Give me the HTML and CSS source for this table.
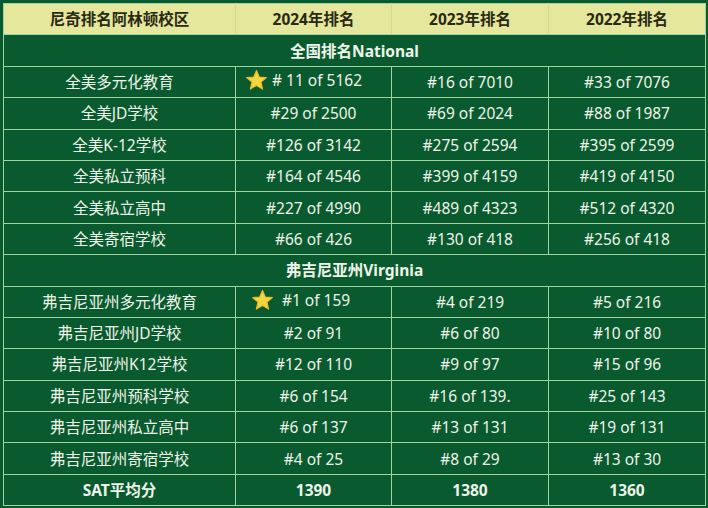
FILE: index.html
```html
<!DOCTYPE html>
<html lang="zh">
<head>
<meta charset="utf-8">
<link rel="stylesheet" href="styles.css">
</head>
<body>
<table class="rank">
  <colgroup>
    <col class="c1"><col class="c2"><col class="c3"><col class="c4">
  </colgroup>
  <thead>
    <tr class="head">
      <th>尼奇排名阿林顿校区</th>
      <th>2024年排名</th>
      <th>2023年排名</th>
      <th>2022年排名</th>
    </tr>
  </thead>
  <tbody>
    <tr class="section"><td colspan="4">全国排名National</td></tr>
    <tr><td>全美多元化教育</td><td><span class="star-wrap s1"><svg class="star" viewBox="0 0 24 24"><path d="M12 1.5 L14.9 8.3 L22.3 8.9 L16.7 13.7 L18.4 21 L12 17.1 L5.6 21 L7.3 13.7 L1.7 8.9 L9.1 8.3 Z" fill="#f6d640" stroke="#e7b928" stroke-width="1.2" stroke-linejoin="round"/></svg># 11 of 5162</span></td><td>#16 of 7010</td><td>#33 of 7076</td></tr>
    <tr><td>全美JD学校</td><td>#29 of 2500</td><td>#69 of 2024</td><td>#88 of 1987</td></tr>
    <tr><td>全美K-12学校</td><td>#126 of 3142</td><td>#275 of 2594</td><td>#395 of 2599</td></tr>
    <tr><td>全美私立预科</td><td>#164 of 4546</td><td>#399 of 4159</td><td>#419 of 4150</td></tr>
    <tr><td>全美私立高中</td><td>#227 of 4990</td><td>#489 of 4323</td><td>#512 of 4320</td></tr>
    <tr><td>全美寄宿学校</td><td>#66 of 426</td><td>#130 of 418</td><td>#256 of 418</td></tr>
    <tr class="section"><td colspan="4">弗吉尼亚州Virginia</td></tr>
    <tr><td>弗吉尼亚州多元化教育</td><td><span class="star-wrap s2"><svg class="star" viewBox="0 0 24 24"><path d="M12 1.5 L14.9 8.3 L22.3 8.9 L16.7 13.7 L18.4 21 L12 17.1 L5.6 21 L7.3 13.7 L1.7 8.9 L9.1 8.3 Z" fill="#f6d640" stroke="#e7b928" stroke-width="1.2" stroke-linejoin="round"/></svg>#1 of 159</span></td><td>#4 of 219</td><td>#5 of 216</td></tr>
    <tr><td>弗吉尼亚州JD学校</td><td>#2 of 91</td><td>#6 of 80</td><td>#10 of 80</td></tr>
    <tr><td>弗吉尼亚州K12学校</td><td>#12 of 110</td><td>#9 of 97</td><td>#15 of 96</td></tr>
    <tr><td>弗吉尼亚州预科学校</td><td>#6 of 154</td><td>#16 of 139.</td><td>#25 of 143</td></tr>
    <tr><td>弗吉尼亚州私立高中</td><td>#6 of 137</td><td>#13 of 131</td><td>#19 of 131</td></tr>
    <tr><td>弗吉尼亚州寄宿学校</td><td>#4 of 25</td><td>#8 of 29</td><td>#13 of 30</td></tr>
    <tr class="total"><td>SAT平均分</td><td>1390</td><td>1380</td><td>1360</td></tr>
  </tbody>
</table>
</body>
</html>
```
FILE: styles.css
```css
html, body {
  margin: 0;
  padding: 0;
  background: #0a5a2f;
}
body {
  padding: 3px 2px 0 3px;
  font-family: "Noto Sans", "Noto Sans CJK SC", sans-serif;
}
.rank {
  width: 702px;
  table-layout: fixed;
  border-collapse: collapse;
  color: #eef4ea;
  font-size: 15.5px;
}
.c1 { width: 232px; }
.c2 { width: 156px; }
.c3 { width: 157px; }
.c4 { width: 157px; }
.rank th, .rank td {
  border: 1.5px solid #9fd49e;
  text-align: center;
  padding: 0;
  height: 30.4px;
  line-height: 18px;
  white-space: nowrap;
}
.head th {
  background: #e4e79c;
  color: #2a2a14;
  font-weight: 700;
  border-color: #d6da8c;
  border-bottom-color: #9fd49e;
  border-top-color: #9fd49e;
  font-size: 15.5px;
}
.head th:first-child { border-left-color: #9fd49e; }
.head th:last-child { border-right-color: #9fd49e; }
.section td, .total td {
  font-weight: 700;
  font-size: 15.5px;
}
.star-wrap {
  display: inline-flex;
  align-items: center;
  gap: 4px;
}
.s1 { margin-left: -20px; }
.s2 { margin-left: -26px; gap: 8px; }
.star {
  width: 23px;
  height: 23px;
}
```
